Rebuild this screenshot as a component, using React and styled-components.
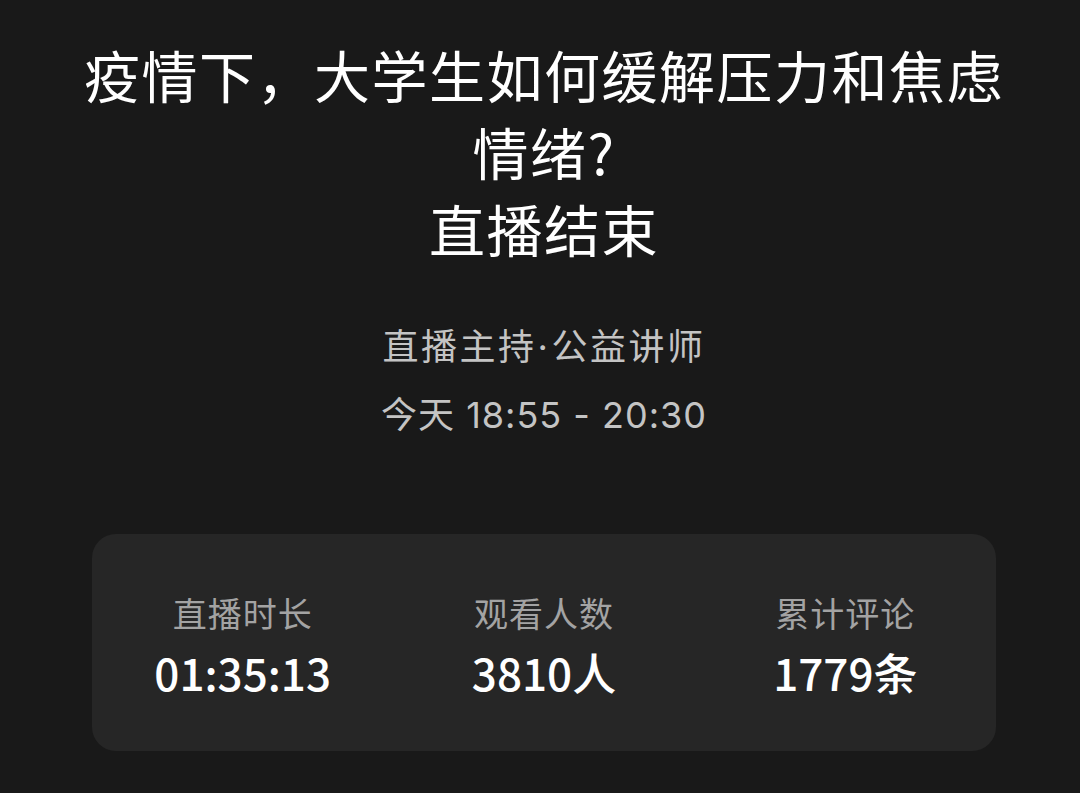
import React from "react";
import styled, { createGlobalStyle } from "styled-components";

const Global = createGlobalStyle`
  html, body { margin: 0; padding: 0; background: #191919; }
  body { font-family: "Noto Sans CJK SC", "Noto Sans", sans-serif; }
`;

const Page = styled.div`
  width: 1080px;
  height: 793px;
  box-sizing: border-box;
  background: #191919;
  padding: 35px 66px 0 74px;
  display: flex;
  flex-direction: column;
  align-items: center;
  overflow: hidden;
`;

const Title = styled.h1`
  margin: 0;
  width: 100%;
  text-align: center;
  color: #ffffff;
  font-size: 56px;
  font-weight: 400;
  line-height: 77px;
  letter-spacing: 1.5px;
`;

const Meta = styled.div`
  margin-top: 47px;
  display: flex;
  flex-direction: column;
  align-items: center;
`;

const MetaLine = styled.div`
  color: #c4c4c4;
  font-family: "Inter", "Noto Sans CJK SC", sans-serif;
  font-size: 36px;
  line-height: 68px;
  letter-spacing: ${(p) => p.$spacing || "1px"};
`;

const Dot = styled.span`
  font-family: "Inter", sans-serif;
  margin: 0 1px;
`;

const Card = styled.div`
  margin-top: 85px;
  width: 904px;
  height: 217px;
  box-sizing: border-box;
  background: #262626;
  border-radius: 24px;
  display: grid;
  grid-template-columns: repeat(3, 1fr);
  align-items: center;
`;

const Stat = styled.div`
  display: flex;
  flex-direction: column;
  align-items: center;
  gap: 8px;
`;

const Label = styled.div`
  color: #a3a3a3;
  font-size: 34px;
  line-height: 50px;
  letter-spacing: 1px;
`;

const Value = styled.div`
  color: #ffffff;
  font-size: 44px;
  font-weight: 500;
  line-height: 52px;
`;

const stats = [
  { label: "直播时长", value: "01:35:13" },
  { label: "观看人数", value: "3810人" },
  { label: "累计评论", value: "1779条" },
];

export default function App() {
  return (
    <>
      <Global />
      <Page>
        <Title>
          疫情下，大学生如何缓解压力和焦虑情绪?
          <br />
          直播结束
        </Title>
        <Meta>
          <MetaLine $spacing="2.5px">
            直播主持<Dot>·</Dot>公益讲师
          </MetaLine>
          <MetaLine $spacing="1px">今天 18:55 - 20:30</MetaLine>
        </Meta>
        <Card>
          {stats.map((s) => (
            <Stat key={s.label}>
              <Label>{s.label}</Label>
              <Value>{s.value}</Value>
            </Stat>
          ))}
        </Card>
      </Page>
    </>
  );
}
